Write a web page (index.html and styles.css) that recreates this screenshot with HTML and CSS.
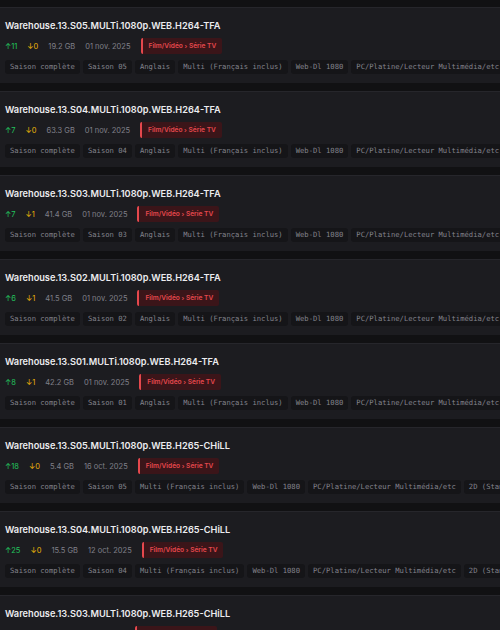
FILE: index.html
```html
<!DOCTYPE html>
<html lang="fr">
<head>
    <meta charset="UTF-8">
    <meta name="viewport" content="width=device-width, initial-scale=1.0">
    <title>Warehouse 13 - Résultats</title>
    <link rel="stylesheet" href="styles.css">
</head>
<body>
    <div class="results">
        <div class="torrent">
            <div class="torrent-name">Warehouse.13.S05.MULTi.1080p.WEB.H264-TFA</div>
            <div class="torrent-meta">
                <span class="seed">&#8593;11</span>
                <span class="leech">&#8595;0</span>
                <span class="size">19.2 GB</span>
                <span class="date">01 nov. 2025</span>
                <span class="category">Film/Vidéo › Série TV</span>
            </div>
            <div class="tags">
                <span class="tag">Saison complète</span>
                <span class="tag">Saison 05</span>
                <span class="tag">Anglais</span>
                <span class="tag">Multi (Français inclus)</span>
                <span class="tag">Web-Dl 1080</span>
                <span class="tag">PC/Platine/Lecteur Multimédia/etc</span>
            </div>
        </div>
        <div class="torrent">
            <div class="torrent-name">Warehouse.13.S04.MULTi.1080p.WEB.H264-TFA</div>
            <div class="torrent-meta">
                <span class="seed">&#8593;7</span>
                <span class="leech">&#8595;0</span>
                <span class="size">63.3 GB</span>
                <span class="date">01 nov. 2025</span>
                <span class="category">Film/Vidéo › Série TV</span>
            </div>
            <div class="tags">
                <span class="tag">Saison complète</span>
                <span class="tag">Saison 04</span>
                <span class="tag">Anglais</span>
                <span class="tag">Multi (Français inclus)</span>
                <span class="tag">Web-Dl 1080</span>
                <span class="tag">PC/Platine/Lecteur Multimédia/etc</span>
            </div>
        </div>
        <div class="torrent">
            <div class="torrent-name">Warehouse.13.S03.MULTi.1080p.WEB.H264-TFA</div>
            <div class="torrent-meta">
                <span class="seed">&#8593;7</span>
                <span class="leech">&#8595;1</span>
                <span class="size">41.4 GB</span>
                <span class="date">01 nov. 2025</span>
                <span class="category">Film/Vidéo › Série TV</span>
            </div>
            <div class="tags">
                <span class="tag">Saison complète</span>
                <span class="tag">Saison 03</span>
                <span class="tag">Anglais</span>
                <span class="tag">Multi (Français inclus)</span>
                <span class="tag">Web-Dl 1080</span>
                <span class="tag">PC/Platine/Lecteur Multimédia/etc</span>
            </div>
        </div>
        <div class="torrent">
            <div class="torrent-name">Warehouse.13.S02.MULTi.1080p.WEB.H264-TFA</div>
            <div class="torrent-meta">
                <span class="seed">&#8593;6</span>
                <span class="leech">&#8595;1</span>
                <span class="size">41.5 GB</span>
                <span class="date">01 nov. 2025</span>
                <span class="category">Film/Vidéo › Série TV</span>
            </div>
            <div class="tags">
                <span class="tag">Saison complète</span>
                <span class="tag">Saison 02</span>
                <span class="tag">Anglais</span>
                <span class="tag">Multi (Français inclus)</span>
                <span class="tag">Web-Dl 1080</span>
                <span class="tag">PC/Platine/Lecteur Multimédia/etc</span>
            </div>
        </div>
        <div class="torrent">
            <div class="torrent-name">Warehouse.13.S01.MULTi.1080p.WEB.H264-TFA</div>
            <div class="torrent-meta">
                <span class="seed">&#8593;8</span>
                <span class="leech">&#8595;1</span>
                <span class="size">42.2 GB</span>
                <span class="date">01 nov. 2025</span>
                <span class="category">Film/Vidéo › Série TV</span>
            </div>
            <div class="tags">
                <span class="tag">Saison complète</span>
                <span class="tag">Saison 01</span>
                <span class="tag">Anglais</span>
                <span class="tag">Multi (Français inclus)</span>
                <span class="tag">Web-Dl 1080</span>
                <span class="tag">PC/Platine/Lecteur Multimédia/etc</span>
            </div>
        </div>
        <div class="torrent">
            <div class="torrent-name">Warehouse.13.S05.MULTi.1080p.WEB.H265-CHiLL</div>
            <div class="torrent-meta">
                <span class="seed">&#8593;18</span>
                <span class="leech">&#8595;0</span>
                <span class="size">5.4 GB</span>
                <span class="date">16 oct. 2025</span>
                <span class="category">Film/Vidéo › Série TV</span>
            </div>
            <div class="tags">
                <span class="tag">Saison complète</span>
                <span class="tag">Saison 05</span>
                <span class="tag">Multi (Français inclus)</span>
                <span class="tag">Web-Dl 1080</span>
                <span class="tag">PC/Platine/Lecteur Multimédia/etc</span>
                <span class="tag">2D (Standard)</span>
            </div>
        </div>
        <div class="torrent">
            <div class="torrent-name">Warehouse.13.S04.MULTi.1080p.WEB.H265-CHiLL</div>
            <div class="torrent-meta">
                <span class="seed">&#8593;25</span>
                <span class="leech">&#8595;0</span>
                <span class="size">15.5 GB</span>
                <span class="date">12 oct. 2025</span>
                <span class="category">Film/Vidéo › Série TV</span>
            </div>
            <div class="tags">
                <span class="tag">Saison complète</span>
                <span class="tag">Saison 04</span>
                <span class="tag">Multi (Français inclus)</span>
                <span class="tag">Web-Dl 1080</span>
                <span class="tag">PC/Platine/Lecteur Multimédia/etc</span>
                <span class="tag">2D (Standard)</span>
            </div>
        </div>
        <div class="torrent">
            <div class="torrent-name">Warehouse.13.S03.MULTi.1080p.WEB.H265-CHiLL</div>
            <div class="torrent-meta">
                <span class="seed">&#8593;21</span>
                <span class="leech">&#8595;0</span>
                <span class="size">9.1 GB</span>
                <span class="date">12 oct. 2025</span>
                <span class="category">Film/Vidéo › Série TV</span>
            </div>
            <div class="tags">
                <span class="tag">Saison complète</span>
                <span class="tag">Saison 03</span>
                <span class="tag">Multi (Français inclus)</span>
                <span class="tag">Web-Dl 1080</span>
                <span class="tag">PC/Platine/Lecteur Multimédia/etc</span>
                <span class="tag">2D (Standard)</span>
            </div>
        </div>
    </div>
</body>
</html>
```

FILE: styles.css
```css
body {
    margin: 0;
    background-color: #111113;
    font-family: Inter, "Open Sans", sans-serif;
    color: #e6e6e9;
    height: 630px;
    overflow: hidden;
}
.results {
    display: flex;
    flex-direction: column;
    gap: 8px;
    padding-top: 7px;
}
.torrent {
    background-color: #1c1c20;
    border-top: 1px solid #26262b;
    padding: 11px 5px 9px 5px;
    height: 55px;
    flex-shrink: 0;
    overflow: hidden;
}
.torrent-name {
    font-size: 9.2px;
    font-weight: 600;
    line-height: 14px;
    white-space: nowrap;
    color: #ececef;
}
.torrent-meta {
    display: flex;
    align-items: center;
    gap: 10px;
    margin-top: 5px;
    font-size: 7.5px;
    color: #80808a;
    white-space: nowrap;
}
.seed {
    color: #22c55e;
}
.leech {
    color: #eab308;
}
.category {
    background-color: #3b1519;
    border-left: 2px solid #e5484d;
    border-radius: 2px;
    color: #e5484d;
    font-size: 6.6px;
    font-weight: 600;
    padding: 4px 6px;
}
.tags {
    display: flex;
    gap: 3px;
    margin-top: 6px;
    white-space: nowrap;
}
.tag {
    background-color: #151518;
    border-radius: 3px;
    color: #83838c;
    font-family: "DejaVu Sans Mono", monospace;
    font-size: 7.2px;
    line-height: 14px;
    padding: 0 5px;
}
```
